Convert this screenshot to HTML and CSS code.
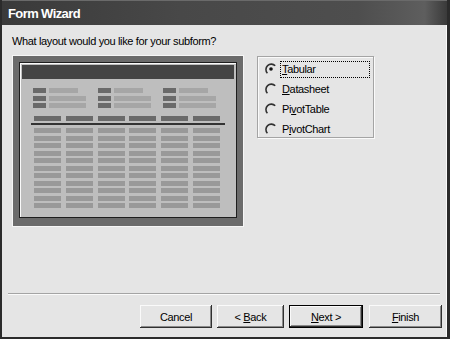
FILE: index.html
```html
<!DOCTYPE html>
<html lang="en">
<head>
    <meta charset="UTF-8">
    <title>Form Wizard</title>
    <link rel="stylesheet" href="styles.css">
</head>
<body>
    <div class="window">
        <div class="titlebar">Form Wizard</div>
        <div class="content">
            <p class="prompt">What layout would you like for your subform?</p>

            <div class="main">
                <!-- preview picture of the chosen layout -->
                <div class="preview">
                    <div class="frame">
                        <div class="panel">
                            <div class="panel-head"></div>
                            <div class="labels">
                                <div class="lgroup">
                                    <span class="lbl"></span><span class="fld short"></span>
                                    <span class="lbl"></span><span class="fld"></span>
                                    <span class="lbl"></span><span class="fld"></span>
                                </div>
                                <div class="lgroup">
                                    <span class="lbl"></span><span class="fld short"></span>
                                    <span class="lbl"></span><span class="fld"></span>
                                    <span class="lbl"></span><span class="fld"></span>
                                </div>
                                <div class="lgroup">
                                    <span class="lbl"></span><span class="fld short"></span>
                                    <span class="lbl"></span><span class="fld"></span>
                                    <span class="lbl"></span><span class="fld"></span>
                                </div>
                            </div>
                            <div class="grid heads">
                                <span></span><span></span><span></span><span></span><span></span><span></span>
                            </div>
                            <div class="rule"></div>
                            <div class="grid rows" id="rows"></div>
                        </div>
                    </div>
                </div>

                <div class="options">
                    <label class="opt">
                        <svg class="radio" width="12" height="12" viewBox="0 0 12 12"><path d="M10.2 2.8 A5 5 0 1 0 2.4 10.2" fill="none" stroke="#303030" stroke-width="1.6"/><circle cx="6" cy="6" r="1.8" fill="#111"/></svg>
                        <span class="text focus"><u>T</u>abular</span>
                    </label>
                    <label class="opt">
                        <svg class="radio" width="12" height="12" viewBox="0 0 12 12"><path d="M10.2 2.8 A5 5 0 1 0 2.4 10.2" fill="none" stroke="#303030" stroke-width="1.6"/></svg>
                        <span class="text"><u>D</u>atasheet</span>
                    </label>
                    <label class="opt">
                        <svg class="radio" width="12" height="12" viewBox="0 0 12 12"><path d="M10.2 2.8 A5 5 0 1 0 2.4 10.2" fill="none" stroke="#303030" stroke-width="1.6"/></svg>
                        <span class="text">Pi<u>v</u>otTable</span>
                    </label>
                    <label class="opt">
                        <svg class="radio" width="12" height="12" viewBox="0 0 12 12"><path d="M10.2 2.8 A5 5 0 1 0 2.4 10.2" fill="none" stroke="#303030" stroke-width="1.6"/></svg>
                        <span class="text">P<u>i</u>votChart</span>
                    </label>
                </div>
            </div>

            <div class="separator"></div>

            <div class="buttons">
                <button class="btn cancel">Cancel</button>
                <button class="btn back">&lt; <u>B</u>ack</button>
                <button class="btn next"><u>N</u>ext &gt;</button>
                <button class="btn finish"><u>F</u>inish</button>
            </div>
        </div>
    </div>

    <script>
    // fill the data rows of the preview (11 rows x 6 columns)
    var rows = document.getElementById('rows');
    for (var i = 0; i < 66; i++) {
        rows.appendChild(document.createElement('span'));
    }
    </script>
</body>
</html>
```

FILE: styles.css
```css
* {
    margin: 0;
    padding: 0;
    box-sizing: border-box;
}
body {
    font-family: "Liberation Sans", Arial, sans-serif;
    font-size: 11px;
    letter-spacing: -0.35px;
    color: #000;
    background: #e5e5e5;
}
.window {
    width: 450px;
    height: 339px;
    display: flex;
    flex-direction: column;
    border-left: 2px solid #2b2b2b;
    border-right: 3px solid #2b2b2b;
    border-bottom: 2px solid #2b2b2b;
    background: #e5e5e5;
}
.titlebar {
    height: 25px;
    padding-left: 6px;
    line-height: 25px;
    font-size: 13px;
    font-weight: bold;
    letter-spacing: -0.6px;
    color: #fff;
    background: linear-gradient(90deg, #3a3a3a 0%, #484848 40%, #4e4e4e 80%, #5e5e5e 95%, #3a3a3a 100%);
    border-top: 1px solid #6a6a6a;
}
.content {
    flex: 1;
    display: flex;
    flex-direction: column;
    border-right: 1px solid #fafafa;
    padding: 10px 4px 9px 10px;
}
.prompt {
    line-height: 13px;
}
.main {
    display: flex;
    margin-top: 7px;
}

/* preview */
.preview {
    border: 1px solid #f6f6f6;
}
.frame {
    width: 230px;
    height: 170px;
    padding: 6px 6px 8px 6px;
    background: #6b6b6b;
}
.panel {
    height: 100%;
    border: 1px solid #1e1e1e;
    background: #bebebe;
    box-shadow: inset 1px 1px #fafafa;
    padding: 2px 2px 0 2px;
}
.panel-head {
    height: 14px;
    background: #444;
}
.labels {
    display: flex;
    margin-top: 9px;
    padding-left: 11px;
}
.lgroup {
    width: 65px;
    display: grid;
    grid-template-columns: 13px auto;
    column-gap: 3px;
    row-gap: 2.5px;
    justify-items: start;
}
.lbl {
    width: 13px;
    height: 5px;
    background: #6a6a6a;
}
.fld {
    width: 37px;
    height: 5px;
    background: #a6a6a6;
}
.fld.short {
    width: 29px;
}
.grid {
    display: grid;
    grid-template-columns: repeat(6, 27px);
    column-gap: 4.8px;
    padding-left: 12px;
}
.heads {
    margin-top: 7.7px;
}
.heads span {
    height: 5px;
    background: #6a6a6a;
}
.rule {
    height: 2px;
    margin: 2px 9px 0 9px;
    background: #333;
}
.rows {
    margin-top: 3.6px;
    row-gap: 2.5px;
}
.rows span {
    height: 5px;
    background: #999;
}

/* layout choices */
.options {
    width: 117px;
    height: 82px;
    margin: 1px 0 0 13px;
    padding: 2px 0 0 7px;
    border: 1px solid #a4a4a4;
    box-shadow: inset 1px 1px #fafafa, 1px 1px #fafafa;
}
.opt {
    display: flex;
    align-items: center;
    height: 20px;
}
.radio {
    flex: none;
    margin-right: 3px;
}
.text {
    padding: 1px;
    border: 1px dotted transparent;
    line-height: 13px;
}
.text.focus {
    width: 90px;
    border-color: #000;
}

/* bottom buttons */
.separator {
    margin: auto 0 10px -4px;
    height: 2px;
    width: 432px;
    border-top: 1px solid #a4a4a4;
    border-bottom: 1px solid #fafafa;
}
.buttons {
    display: flex;
    justify-content: flex-end;
}
.btn {
    height: 23px;
    font-family: "Liberation Sans", Arial, sans-serif;
    font-size: 11px;
    letter-spacing: -0.35px;
    color: #000;
    background: #e5e5e5;
    border: none;
    box-shadow: inset -1px -1px #303030, inset 1px 1px #fafafa, inset -2px -2px #8a8a8a;
}
.cancel {
    width: 72px;
}
.back {
    width: 67px;
    margin-left: 5px;
}
.next {
    width: 74px;
    margin-left: 5px;
    border: 1px solid #000;
}
.finish {
    width: 73px;
    margin-left: 6px;
}
```
